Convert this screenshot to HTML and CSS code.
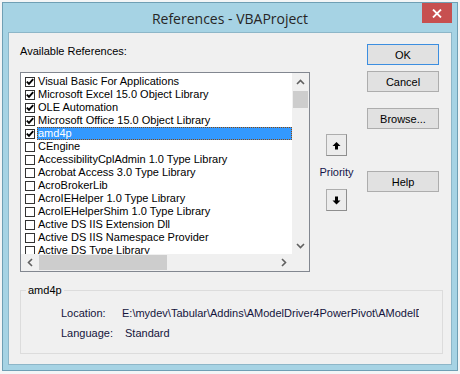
FILE: index.html
```html
<!DOCTYPE html>
<html>
<head>
<meta charset="utf-8">
<title>References - VBAProject</title>
<link rel="stylesheet" href="styles.css">
</head>
<body>
<div class="window">
  <div class="titlebar">
    <div class="title">References - VBAProject</div>
    <div class="close"><svg width="10" height="9" viewBox="0 0 10 9"><path d="M1 0.5L9 8.5M9 0.5L1 8.5" stroke="#fff" stroke-width="1.8" fill="none"/></svg></div>
  </div>
  <div class="client">
    <div class="top">
      <div class="leftcol">
        <div class="avail">Available References:</div>
        <div class="listbox">
          <div class="items">
            <div class="row"><span class="cb"><svg width="8" height="8" viewBox="0 0 8 8"><path d="M0.8 3.6L3 5.8L7.2 1.2" stroke="#000" stroke-width="1.9" fill="none"/></svg></span><span class="txt">Visual Basic For Applications</span></div>
            <div class="row"><span class="cb"><svg width="8" height="8" viewBox="0 0 8 8"><path d="M0.8 3.6L3 5.8L7.2 1.2" stroke="#000" stroke-width="1.9" fill="none"/></svg></span><span class="txt">Microsoft Excel 15.0 Object Library</span></div>
            <div class="row"><span class="cb"><svg width="8" height="8" viewBox="0 0 8 8"><path d="M0.8 3.6L3 5.8L7.2 1.2" stroke="#000" stroke-width="1.9" fill="none"/></svg></span><span class="txt">OLE Automation</span></div>
            <div class="row"><span class="cb"><svg width="8" height="8" viewBox="0 0 8 8"><path d="M0.8 3.6L3 5.8L7.2 1.2" stroke="#000" stroke-width="1.9" fill="none"/></svg></span><span class="txt">Microsoft Office 15.0 Object Library</span></div>
            <div class="row sel"><span class="cb"><svg width="8" height="8" viewBox="0 0 8 8"><path d="M0.8 3.6L3 5.8L7.2 1.2" stroke="#000" stroke-width="1.9" fill="none"/></svg></span><span class="txt">amd4p</span></div>
            <div class="row"><span class="cb"></span><span class="txt">CEngine</span></div>
            <div class="row"><span class="cb"></span><span class="txt">AccessibilityCplAdmin 1.0 Type Library</span></div>
            <div class="row"><span class="cb"></span><span class="txt">Acrobat Access 3.0 Type Library</span></div>
            <div class="row"><span class="cb"></span><span class="txt">AcroBrokerLib</span></div>
            <div class="row"><span class="cb"></span><span class="txt">AcroIEHelper 1.0 Type Library</span></div>
            <div class="row"><span class="cb"></span><span class="txt">AcroIEHelperShim 1.0 Type Library</span></div>
            <div class="row"><span class="cb"></span><span class="txt">Active DS IIS Extension Dll</span></div>
            <div class="row"><span class="cb"></span><span class="txt">Active DS IIS Namespace Provider</span></div>
            <div class="row"><span class="cb"></span><span class="txt">Active DS Type Library</span></div>
          </div>
          <div class="vscroll">
            <div class="sarrow"><svg width="9" height="6" viewBox="0 0 9 6"><path d="M1 5L4.5 1.5L8 5" stroke="#606060" stroke-width="1.6" fill="none"/></svg></div>
            <div class="vthumb"></div>
            <div class="spacer"></div>
            <div class="sarrow"><svg width="9" height="6" viewBox="0 0 9 6"><path d="M1 1L4.5 4.5L8 1" stroke="#606060" stroke-width="1.6" fill="none"/></svg></div>
          </div>
          <div class="hscroll">
            <div class="harrow"><svg width="6" height="9" viewBox="0 0 6 9"><path d="M5 1L1.5 4.5L5 8" stroke="#606060" stroke-width="1.6" fill="none"/></svg></div>
            <div class="hthumb"></div>
            <div class="spacer"></div>
            <div class="harrow"><svg width="6" height="9" viewBox="0 0 6 9"><path d="M1 1L4.5 4.5L1 8" stroke="#606060" stroke-width="1.6" fill="none"/></svg></div>
          </div>
          <div class="corner"></div>
        </div>
      </div>
      <div class="midcol">
        <div class="abtn"><svg width="9" height="9" viewBox="0 0 9 9"><path d="M4.5 1L8.5 5L6 5L6 8.5L3 8.5L3 5L0.5 5Z" fill="#000"/></svg></div>
        <div class="prio">Priority</div>
        <div class="abtn"><svg width="9" height="9" viewBox="0 0 9 9"><path d="M4.5 8.5L8.5 4.5L6 4.5L6 0.5L3 0.5L3 4.5L0.5 4.5Z" fill="#000"/></svg></div>
      </div>
      <div class="rightcol">
        <div class="btn default">OK</div>
        <div class="btn">Cancel</div>
        <div class="btn browse">Browse...</div>
        <div class="btn help">Help</div>
      </div>
    </div>
    <fieldset class="group">
      <legend>amd4p</legend>
      <div class="info">
        <span class="lbl">Location:</span><span class="val">E:\mydev\Tabular\Addins\AModelDriver4PowerPivot\AModelDriver4PowerPivot.dll</span>
        <span class="lbl">Language:</span><span class="val std">Standard</span>
      </div>
    </fieldset>
  </div>
</div>
</body>
</html>
```
FILE: styles.css
```css
* { box-sizing: border-box; }
html, body { margin: 0; padding: 0; }
body {
  width: 460px;
  height: 374px;
  overflow: hidden;
  background: #f3f5f6;
  font-family: "Liberation Sans", Arial, sans-serif;
  font-size: 11px;
  color: #000;
}
.window {
  margin: 2px 0 0 2px;
  width: 456px;
  height: 369px;
  background: #a6d3e4;
  border: 1px solid #6f9fb4;
  display: flex;
  flex-direction: column;
}
.titlebar {
  position: relative;
  height: 29px;
  flex: none;
  display: flex;
  align-items: center;
  justify-content: center;
}
.title {
  font-family: "Open Sans", "Noto Sans", sans-serif;
  font-size: 14px;
  color: #262626;
  margin-top: 1px;
}
.close {
  position: absolute;
  top: 0;
  right: 5px;
  width: 30px;
  height: 20px;
  background: #c75050;
  display: flex;
  align-items: center;
  justify-content: center;
}
.client {
  margin: 0 5px;
  height: 333px;
  flex: none;
  background: #f0f0f0;
  border: 1px solid #8db6c8;
  display: flex;
  flex-direction: column;
}
.top { display: flex; }
.leftcol {
  margin-left: 11px;
  width: 290px;
  padding-top: 12px;
}
.avail {
  line-height: 13px;
  height: 13px;
  margin-bottom: 14px;
}
.listbox {
  width: 290px;
  height: 200px;
  border: 1px solid #828790;
  background: #fff;
  display: grid;
  grid-template-columns: 271px 17px;
  grid-template-rows: 181px 17px;
}
.items {
  padding-top: 2px;
  overflow: hidden;
}
.row {
  display: flex;
  align-items: center;
  height: 13px;
  padding-left: 4px;
  white-space: nowrap;
}
.cb {
  width: 10px;
  height: 10px;
  flex: none;
  border: 1px solid #333;
  background: #fff;
  margin-right: 3px;
  display: flex;
  align-items: center;
  justify-content: center;
}
.txt { line-height: 13px; }
.row.sel .txt {
  flex: 1;
  background: #3399ff;
  color: #fff;
  margin-left: -1px;
  padding-left: 1px;
  outline: 1px dotted #8a4a10;
  outline-offset: -1px;
}
.vscroll {
  background: #f0f0f0;
  display: flex;
  flex-direction: column;
}
.sarrow {
  height: 17px;
  flex: none;
  display: flex;
  align-items: center;
  justify-content: center;
}
.vthumb {
  height: 17px;
  flex: none;
  margin: 1px 1px 0;
  background: #cdcdcd;
}
.spacer { flex: 1; }
.hscroll {
  background: #f0f0f0;
  display: flex;
}
.harrow {
  width: 17px;
  flex: none;
  display: flex;
  align-items: center;
  justify-content: center;
}
.hthumb {
  width: 128px;
  flex: none;
  margin: 1px 0 1px 1px;
  background: #cdcdcd;
}
.corner { background: #f0f0f0; }
.midcol {
  margin-left: 16px;
  width: 21px;
  padding-top: 101px;
  display: flex;
  flex-direction: column;
  align-items: center;
}
.abtn {
  width: 21px;
  height: 22px;
  flex: none;
  border: 1px solid #adadad;
  border-right-color: #8e8e8e;
  border-bottom-color: #8e8e8e;
  background: #ececec;
  display: flex;
  align-items: center;
  justify-content: center;
}
.prio {
  margin: 10px 0;
  line-height: 13px;
  white-space: nowrap;
  color: #15154a;
}
.rightcol {
  margin-left: 20px;
  width: 72px;
  padding-top: 11px;
  display: flex;
  flex-direction: column;
}
.btn {
  height: 21px;
  flex: none;
  border: 1px solid #adadad;
  background: #e1e1e1;
  display: flex;
  align-items: center;
  justify-content: center;
}
.btn + .btn { margin-top: 6px; }
.btn.default { border-color: #3c8ee0; }
.btn.browse { margin-top: 16px; }
.btn.help { margin-top: 42px; }
.group {
  margin: 12px 0 0 11px;
  width: 423px;
  border: 1px solid #dcdcdc;
  padding: 0;
  min-width: 0;
}
.group legend {
  margin-left: 5px;
  padding: 0 2px;
  line-height: 13px;
  font-size: 11px;
}
.info {
  padding: 10px 0 13px 40px;
  display: grid;
  grid-template-columns: 61px 297px;
  row-gap: 7px;
  line-height: 13px;
  color: #14143c;
}
.val {
  white-space: nowrap;
  overflow: hidden;
}
.val.std { padding-left: 3px; }
```
